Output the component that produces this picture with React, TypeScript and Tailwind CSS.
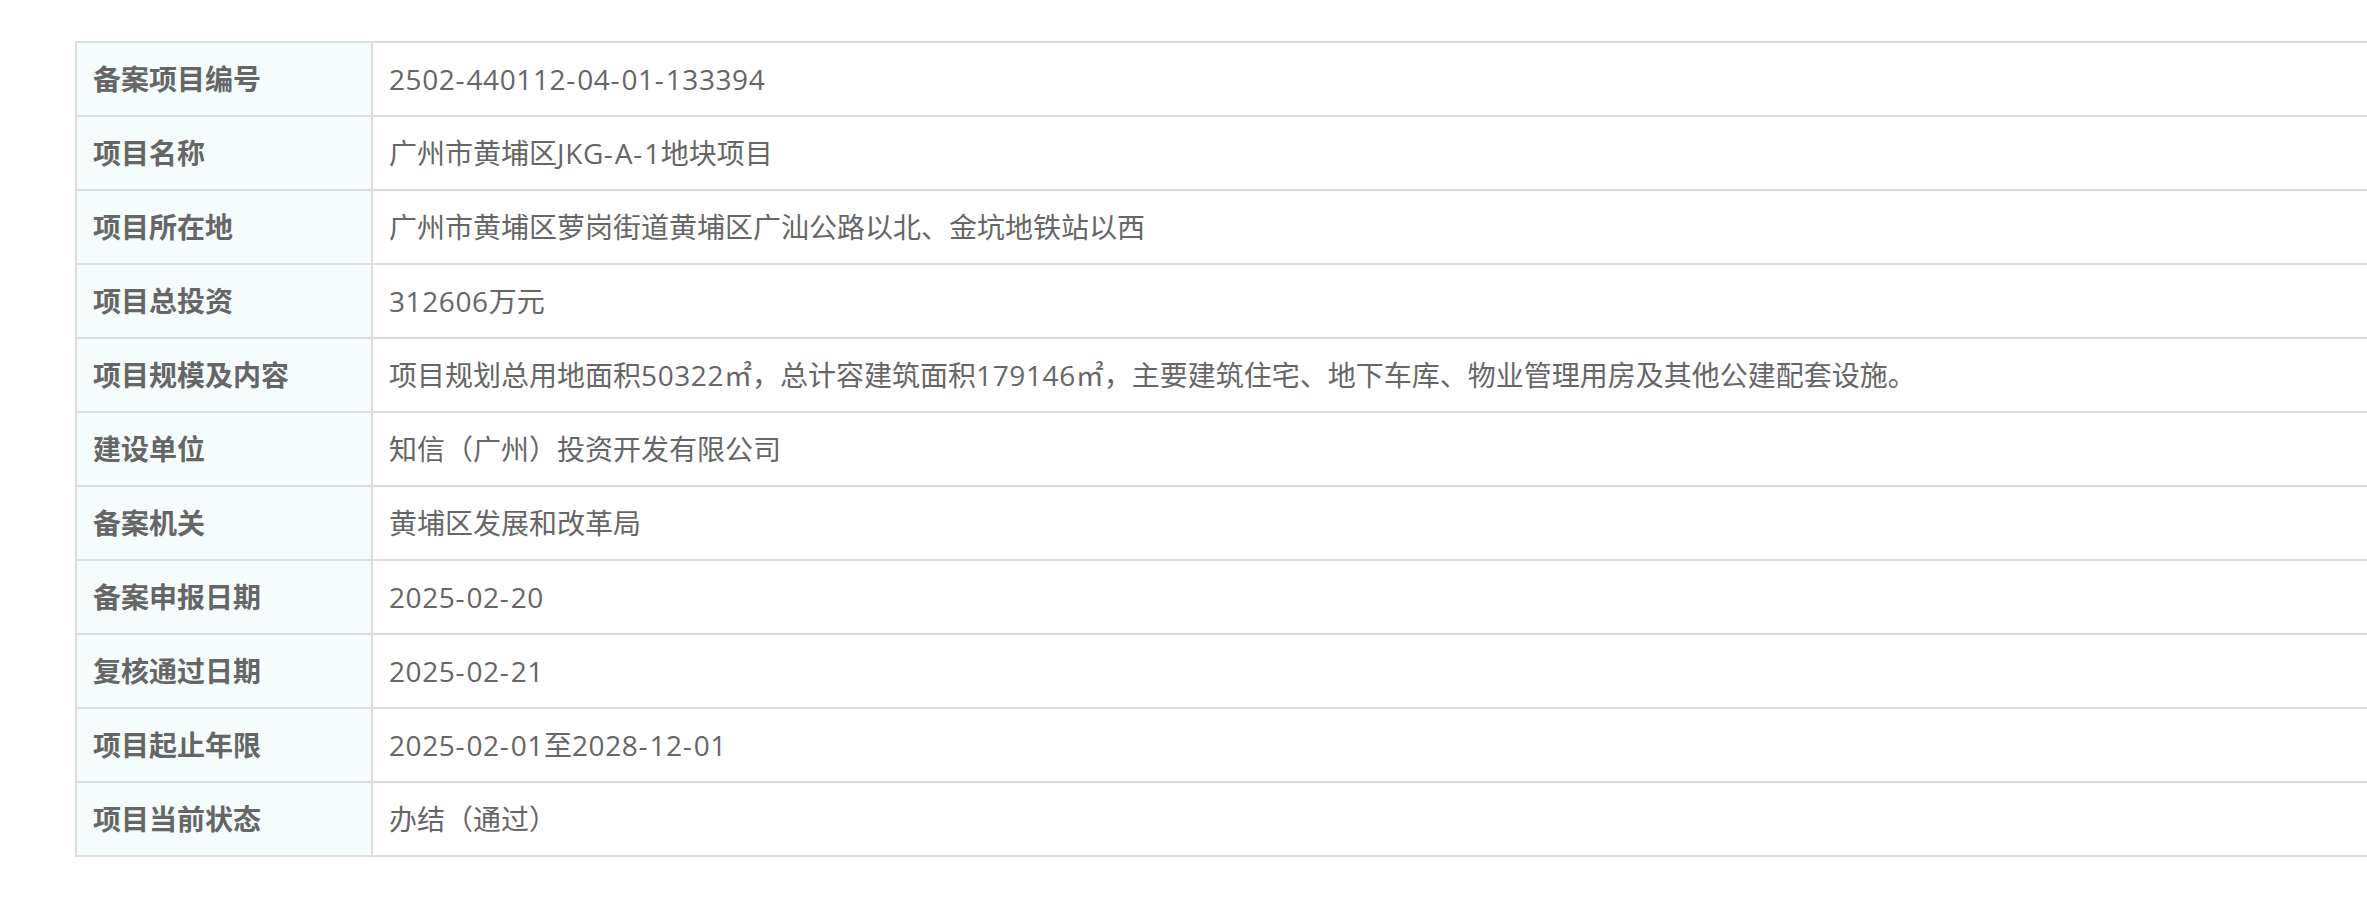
import React from "react";

const rows: [string, string][] = [
  ["备案项目编号", "2502-440112-04-01-133394"],
  ["项目名称", "广州市黄埔区JKG-A-1地块项目"],
  ["项目所在地", "广州市黄埔区萝岗街道黄埔区广汕公路以北、金坑地铁站以西"],
  ["项目总投资", "312606万元"],
  ["项目规模及内容", "项目规划总用地面积50322㎡，总计容建筑面积179146㎡，主要建筑住宅、地下车库、物业管理用房及其他公建配套设施。"],
  ["建设单位", "知信（广州）投资开发有限公司"],
  ["备案机关", "黄埔区发展和改革局"],
  ["备案申报日期", "2025-02-20"],
  ["复核通过日期", "2025-02-21"],
  ["项目起止年限", "2025-02-01至2028-12-01"],
  ["项目当前状态", "办结（通过）"],
];

function Value({ text }: { text: string }) {
  const parts = text.match(/[A-Za-z0-9]+|-+|[^A-Za-z0-9-]+/g) || [];
  return (
    <>
      {parts.map((p, i) =>
        /^[A-Za-z0-9]+$/.test(p) ? (
          <span key={i} className="tracking-[0.6px]">{p}</span>
        ) : /^-+$/.test(p) ? (
          <span key={i} className="tracking-[2px]">{p}</span>
        ) : (
          <span key={i}>{p}</span>
        )
      )}
    </>
  );
}

export default function App() {
  return (
    <div
      className="w-[2367px] h-[897px] overflow-hidden bg-white pl-[75px] pt-[41px] text-[#666] text-[28px]"
      style={{ fontFamily: '"Open Sans", "Noto Sans CJK SC", sans-serif' }}
    >
      <div className="w-[2400px] border-t-2 border-l-2 border-[#dddddd]">
        {rows.map(([k, v]) => (
          <div key={k} className="flex h-[74px] border-b-2 border-[#dddddd]">
            <div className="w-[296px] shrink-0 border-r-2 border-[#dddddd] bg-[#f4fcfc] pl-[16px] flex items-center font-bold">
              {k}
            </div>
            <div className="flex-1 pl-[16px] flex items-center whitespace-pre">
              <Value text={v} />
            </div>
          </div>
        ))}
      </div>
    </div>
  );
}
